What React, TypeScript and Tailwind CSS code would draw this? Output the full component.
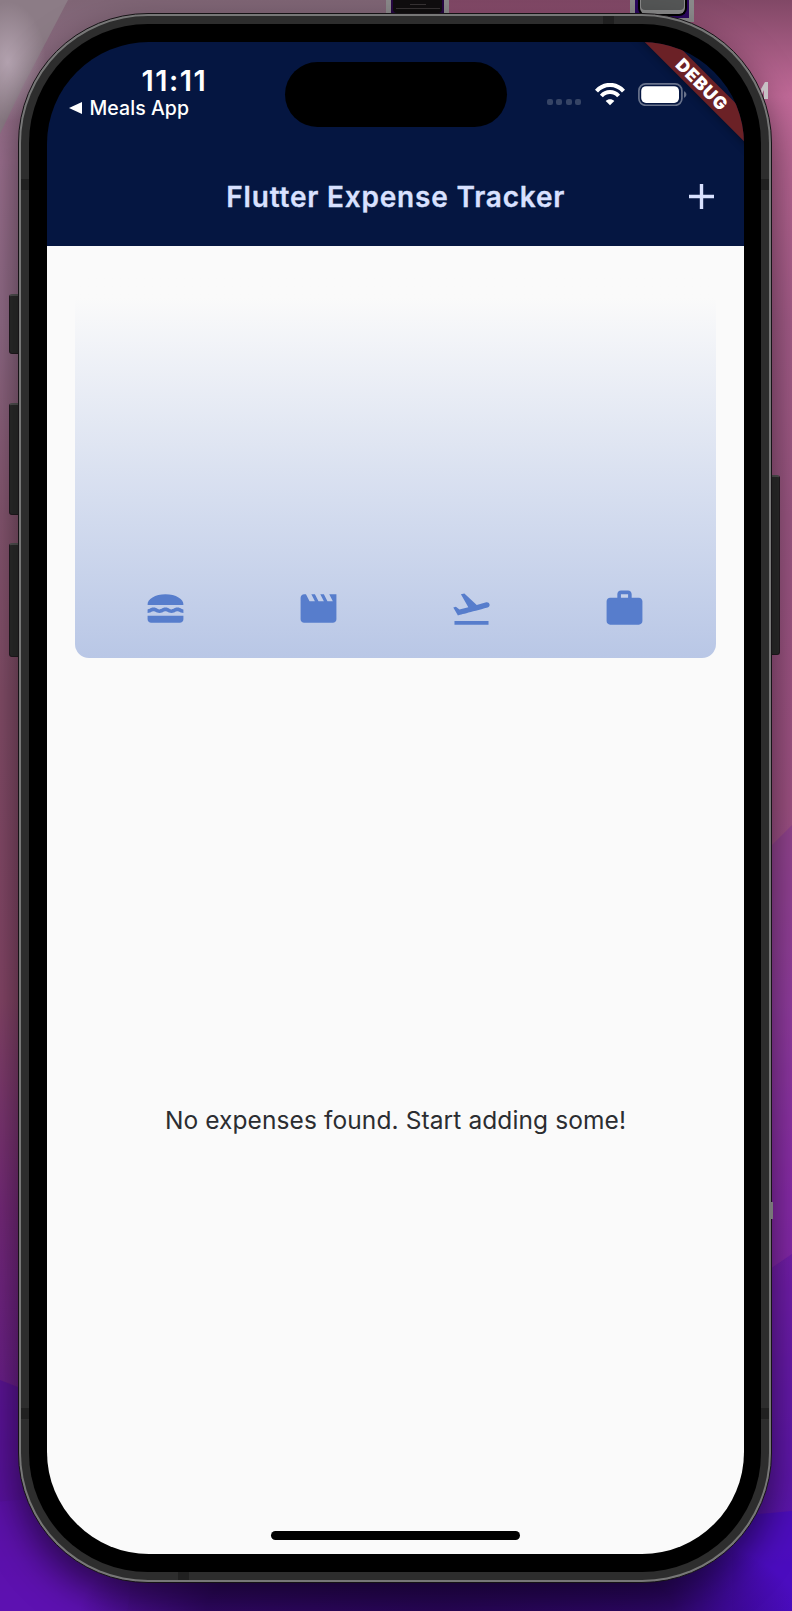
import { MdFlightTakeoff, MdLunchDining, MdMovie, MdWork } from "react-icons/md";

const categories = [MdLunchDining, MdMovie, MdFlightTakeoff, MdWork];

function Wallpaper() {
  return (
    <svg className="absolute inset-0 h-full w-full" viewBox="0 0 792 1611" preserveAspectRatio="none">
      <defs>
        <linearGradient id="left" x1="0" y1="0" x2="0" y2="1">
          <stop offset="0" stopColor="#806676" />
          <stop offset=".1" stopColor="#9d7190" />
          <stop offset=".2" stopColor="#926c88" />
          <stop offset=".32" stopColor="#875771" />
          <stop offset=".43" stopColor="#844e69" />
          <stop offset=".62" stopColor="#864668" />
          <stop offset=".75" stopColor="#762a7a" />
          <stop offset=".85" stopColor="#6c2088" />
          <stop offset=".93" stopColor="#6014a0" />
          <stop offset="1" stopColor="#6a14cc" />
        </linearGradient>
        <linearGradient id="right" x1="0" y1="0" x2="0" y2="1">
          <stop offset="0" stopColor="#814866" />
          <stop offset=".06" stopColor="#c26a99" />
          <stop offset=".2" stopColor="#a65d8a" />
          <stop offset=".32" stopColor="#9c5783" />
          <stop offset=".5" stopColor="#a05284" />
          <stop offset=".62" stopColor="#9e469e" />
          <stop offset=".74" stopColor="#902cac" />
          <stop offset=".78" stopColor="#8a28ac" />
          <stop offset=".85" stopColor="#7420a8" />
          <stop offset=".94" stopColor="#6018ac" />
          <stop offset="1" stopColor="#5612c4" />
        </linearGradient>
        <radialGradient id="glow">
          <stop offset="0" stopColor="#b3a2af" />
          <stop offset="1" stopColor="#b3a2af" stopOpacity="0" />
        </radialGradient>
        <radialGradient id="dusk">
          <stop offset="0" stopColor="#2c0660" />
          <stop offset=".65" stopColor="#2c0660" stopOpacity=".85" />
          <stop offset="1" stopColor="#2c0660" stopOpacity="0" />
        </radialGradient>
      </defs>
      <path d="M0 0h410v1611H0z" fill="url(#left)" />
      <path d="M410 0h382v1611H410z" fill="url(#right)" />
      <path d="M0 0h68L45 44 22 88 0 134z" fill="#8c7c86" />
      <ellipse cx="8" cy="62" rx="38" ry="60" fill="url(#glow)" />
      <path d="M792 825l-60 60v410l60-41z" fill="#7a2ba6" opacity=".3" />
      <path d="M792 1254l-60 41v316h60z" fill="#5512ac" opacity=".4" />
      <path d="M0 1380l410 160v71H0z" fill="#530f9a" opacity=".65" />
      <ellipse cx="20" cy="1590" rx="110" ry="90" fill="#6a14cc" opacity=".2" />
      <path d="M792 1511L410 1545v66h382z" fill="#4509c5" opacity=".65" />
      <ellipse cx="440" cy="1611" rx="360" ry="110" fill="url(#dusk)" />
    </svg>
  );
}

function DesktopItems() {
  return (
    <>
      <div className="absolute left-[386px] top-0 h-5 w-[63px] border-x-[5px] border-[#8b8a8b] bg-[#270744] px-0.5">
        <div className="h-[13px] rounded-b bg-[#100e0f] pt-px">
          <div className="mx-auto mt-[3px] h-px w-4 bg-[#383435]" />
          <div className="mx-auto mt-[3px] h-px w-11 bg-[#383435]" />
        </div>
      </div>
      <div className="absolute left-[630px] top-0 h-[22px] w-16 border-x-[5px] border-b-4 border-[#8b8a8b] bg-[#2b075f]">
        <div className="mx-auto h-4 w-[49px] rounded-b-lg border-2 border-t-0 border-black bg-[#8a8a8a] px-px">
          <div className="h-[10px] rounded-b bg-[#555757]" />
        </div>
      </div>
    </>
  );
}

function StatusBar() {
  return (
    <div className="flex h-[102px] font-['Inter',sans-serif] text-white">
      <div className="w-[237.5px] shrink-0 pt-[23px]">
        <div className="pl-[94.5px] text-[29px] font-semibold leading-8 tracking-[1.5px]">11:11</div>
        <div className="flex items-center gap-[7.5px] pl-[22px] text-[19.5px] font-medium leading-[22px] tracking-[0.05px]">
          <svg className="h-3 w-[13px]" viewBox="0 0 13 12" fill="currentColor"><path d="M0 6 13 0v12z" /></svg>
          Meals App
        </div>
      </div>
      <div className="mt-5 h-[65px] w-[222px] shrink-0 rounded-full bg-black" />
      <div className="flex flex-1 pl-[40.5px] pt-[40.5px]">
        <div className="flex gap-[3.4px] pt-[16.5px]">
          {[0, 1, 2, 3].map((i) => <i key={i} className="h-[6px] w-[6px] rounded-[2px] bg-[#364465]" />)}
        </div>
        <svg className="ml-[13.5px] h-[23px] w-[30px] shrink-0" viewBox="0 0 30 23" fill="none" stroke="#fff">
          <path d="M1.5 8.1C9-.2 21-.2 28.5 8.1" strokeWidth="4.1" />
          <path d="M6.4 13C11 7.8 19 7.8 23.6 13" strokeWidth="4" />
          <path d="M15 22.3l-4.3-4.4c2.3-2.3 6.3-2.3 8.6 0z" fill="#fff" stroke="none" />
        </svg>
        <svg className="ml-[13px] h-[23px] w-[49px] shrink-0" viewBox="0 0 49 23">
          <rect x=".9" y=".9" width="43" height="21.4" rx="6.8" fill="none" stroke="#69738c" strokeWidth="1.7" />
          <rect x="3.2" y="3.2" width="37.8" height="16.7" rx="4.8" fill="#fff" />
          <path d="M46 8.3c3.2 1.3 3.2 5.2 0 6.5z" fill="#69738c" />
        </svg>
      </div>
    </div>
  );
}

function DebugBanner() {
  return (
    <div className="absolute right-0 top-0 h-[125px] w-[125px] overflow-hidden">
      <div className="absolute left-[-7.2px] top-[31.7px] flex h-[21.3px] w-[180px] rotate-45 items-center justify-center bg-[#6b2126] font-['Inter',sans-serif] text-[17.5px] font-black leading-none tracking-[0.9px] text-white shadow-[0_0_10px_rgba(0,0,0,0.45)]">
        DEBUG
      </div>
    </div>
  );
}

function Phone() {
  return (
    <>
      <div className="absolute left-[9px] top-[294px] flex w-3 flex-col">
        <div className="h-[60px] rounded-l-[3px] border border-t-2 border-[#221c20] border-t-[#555] bg-[#2d2d2d]" />
        <div className="mt-[49px] h-[112px] rounded-l-[3px] border border-t-2 border-[#221c20] border-t-[#555] bg-[#2d2d2d]" />
        <div className="mt-[28px] h-[114px] rounded-l-[3px] border border-t-2 border-[#221c20] border-t-[#555] bg-[#2d2d2d]" />
      </div>
      <div className="absolute left-[768px] top-[475px] h-[180px] w-3 rounded-r-[3px] border border-t-2 border-[#221c20] border-t-[#555] bg-[#2d2d2d]" />
      <div className="absolute left-[18px] top-[13px] h-[1570px] w-[754px] rounded-[130px] border border-[#161316] bg-[#777] p-[2px] shadow-[0_18px_38px_rgba(0,0,0,0.55)]">
        <div className="relative h-full w-full rounded-[127px] bg-[#2d2d2d] p-[8px]">
          <i className="absolute left-0 top-[163px] h-[11px] w-full bg-[#202020]" />
          <i className="absolute bottom-[161px] left-0 h-[11px] w-full bg-[#202020]" />
          <i className="absolute left-[582px] top-0 h-3 w-[11px] bg-[#202020]" />
          <i className="absolute bottom-0 left-[157px] h-3 w-[11px] bg-[#202020]" />
          <div className="relative h-full w-full rounded-[119px] bg-black pb-[18px] pl-[18px] pr-[17px] pt-[18px]">
            <Screen />
          </div>
        </div>
      </div>
      <svg className="absolute left-[761px] top-[82px] h-[17px] w-[7px]" viewBox="0 0 7 17"><path d="M0 7 4 0h3v17H3V8l-2 4z" fill="#c6c0c4" /></svg>
      <div className="absolute left-[770px] top-[1202px] h-[17px] w-[3px] bg-[#777]" />
    </>
  );
}

function Screen() {
  return (
    <main className="relative flex h-full w-full flex-col overflow-hidden rounded-[102px] bg-[linear-gradient(#051641_204px,#fafafa_204px)]">
      <header className="h-[204px] shrink-0">
        <StatusBar />
        <div className="flex h-[102px] items-center pt-[3px] text-[#d9e1ff]">
          <div className="w-[55.5px]" />
          <h1 className="flex-1 whitespace-nowrap text-center font-['Inter',sans-serif] text-[28px] font-semibold tracking-[0.8px] [-webkit-text-stroke:0.3px_#d9e1ff]">Flutter Expense Tracker</h1>
          <svg className="mr-[30px] h-[25px] w-[25px]" viewBox="0 0 25 25" stroke="currentColor" strokeWidth="3.4"><path d="M0 12.5h25M12.5 0v25" /></svg>
        </div>
      </header>
      <section className="ml-[28px] mr-[28.5px] mt-[29px] flex h-[382.5px] shrink-0 items-end rounded-[14px] bg-linear-to-b from-[#fafafa] from-6% to-[#b9c7e6] px-[14px] pb-[28px]">
        {categories.map((Icon, i) => (
          <div key={i} className="flex flex-1 justify-center"><Icon className="h-[43px] w-[43px] text-[#577dcc]" /></div>
        ))}
      </section>
      <p className="mt-[445px] text-center font-['Inter',sans-serif] text-[24.5px] leading-[34px] tracking-[0.1px] text-[#2b2d31]">No expenses found. Start adding some!</p>
      <div className="mx-auto mb-[14px] mt-auto h-[9px] w-[249px] rounded-full bg-black" />
      <DebugBanner />
    </main>
  );
}

export default function App() {
  return (
    <div className="relative h-[1611px] w-[792px] overflow-hidden">
      <Wallpaper />
      <DesktopItems />
      <Phone />
    </div>
  );
}
